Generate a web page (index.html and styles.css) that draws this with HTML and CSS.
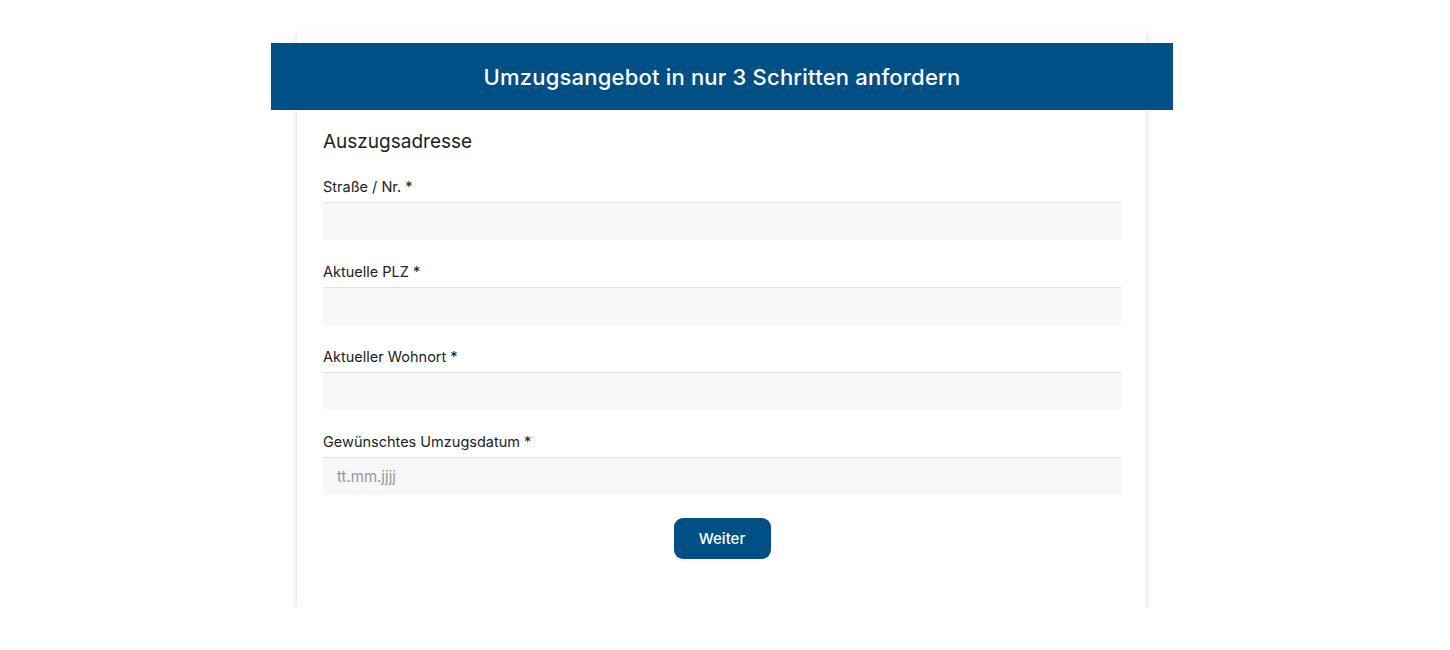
FILE: index.html
```html
<!DOCTYPE html>
<html lang="de">
<head>
    <meta charset="UTF-8">
    <meta name="viewport" content="width=device-width, initial-scale=1.0">
    <title>Umzugsangebot</title>
    <link rel="stylesheet" href="styles.css">
</head>
<body>
    <div class="form-card">
        <div class="form-header">
            <h1>Umzugsangebot in nur 3 Schritten anfordern</h1>
        </div>

        <form class="step-form">
            <h2 class="step-title">Auszugsadresse</h2>

            <div class="field">
                <label for="street">Straße / Nr. *</label>
                <input type="text" id="street">
            </div>

            <div class="field">
                <label for="zip">Aktuelle PLZ *</label>
                <input type="text" id="zip">
            </div>

            <div class="field">
                <label for="city">Aktueller Wohnort *</label>
                <input type="text" id="city">
            </div>

            <div class="field">
                <label for="date">Gewünschtes Umzugsdatum *</label>
                <input type="text" id="date" placeholder="tt.mm.jjjj">
            </div>

            <div class="form-actions">
                <button type="button" class="btn-next">Weiter</button>
            </div>
        </form>
    </div>
</body>
</html>
```

FILE: styles.css
```css
body {
    margin: 0;
    background: #fff;
    color: #222;
    font-family: "Inter", "Noto Sans", sans-serif;
}
.form-card {
    width: 849px;
    margin: 30px 0 0 297px;
    padding: 13px 25px 49px 26px;
    box-sizing: border-box;
    background: #fff;
    box-shadow: 0 3px 6px rgba(0, 0, 0, 0.16);
}
.form-header {
    margin: 0 -52px 0 -52px;
    height: 67px;
    background: #005085;
    display: flex;
    align-items: center;
    justify-content: center;
}
.form-header h1 {
    margin: 0;
    color: #fff;
    font-size: 22px;
    font-weight: 500;
    letter-spacing: 0.2px;
}
.step-title {
    margin: 20px 0 23px;
    font-size: 19px;
    font-weight: 400;
    line-height: 24px;
    color: #222;
}
.field {
    display: flex;
    flex-direction: column;
    margin-bottom: 22px;
}
.field label {
    font-size: 14.5px;
    line-height: 20px;
    margin-bottom: 5px;
    color: #222;
}
.field input {
    height: 38px;
    box-sizing: border-box;
    border: none;
    border-top: 1px solid #e3e3e3;
    background: #f7f7f7;
    padding: 0 14px;
    font-family: inherit;
    font-size: 15px;
    color: #333;
}
.field input::placeholder {
    color: #999;
}
.form-actions {
    display: flex;
    justify-content: center;
    padding-top: 1px;
}
.btn-next {
    width: 97px;
    height: 41px;
    border: none;
    border-radius: 9px;
    background: #005085;
    color: #fff;
    font-family: inherit;
    font-size: 15px;
    font-weight: 500;
    cursor: pointer;
}
```
